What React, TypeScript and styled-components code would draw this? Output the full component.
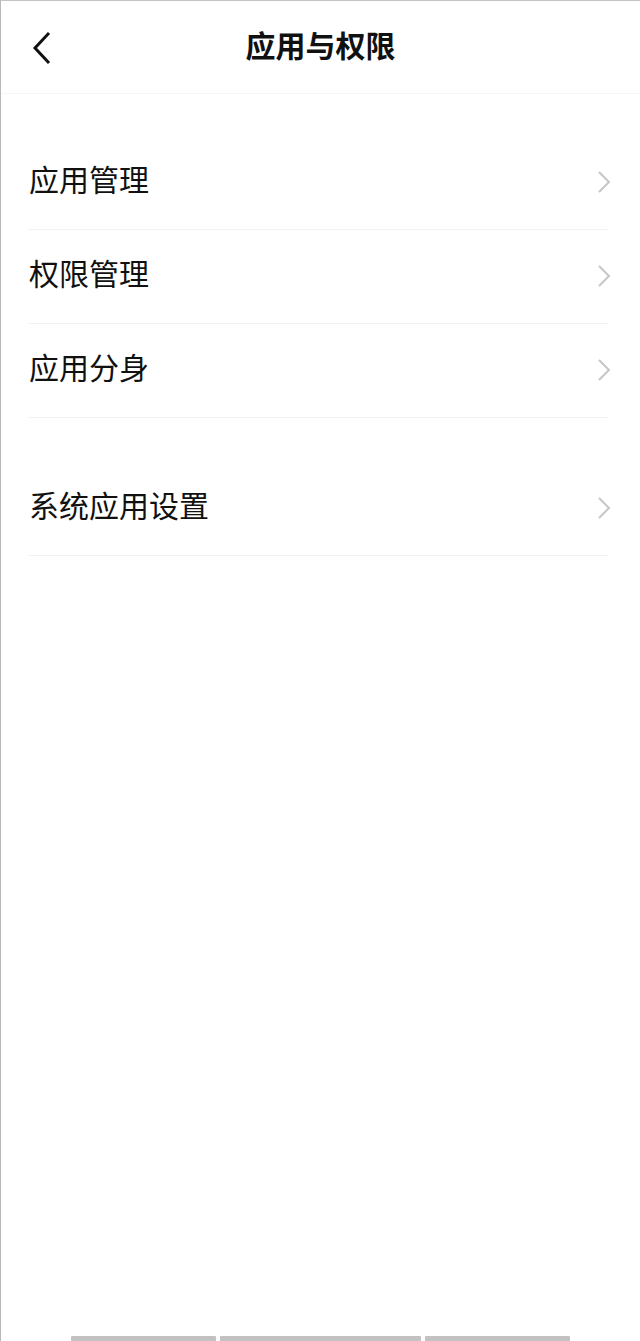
import React from "react";
import styled, { createGlobalStyle } from "styled-components";

const GlobalStyle = createGlobalStyle`
	html, body {
		margin: 0;
		padding: 0;
		background: #ffffff;
	}
	body {
		font-family: "Noto Sans CJK SC", "Noto Sans", sans-serif;
	}
`;

interface Item {
	label: string;
}

const groups: Item[][] = [
	[{ label: "应用管理" }, { label: "权限管理" }, { label: "应用分身" }],
	[{ label: "系统应用设置" }],
];

const App: React.FC = () => {
	return (
		<>
			<GlobalStyle />
			<Screen>
				<Header>
					<BackButton aria-label="返回">
						<svg width="24" height="34" viewBox="0 0 24 34">
							<path
								d="M19 3 L6 17 L19 31"
								fill="none"
								stroke="#111"
								strokeWidth="3"
								strokeLinecap="square"
							/>
						</svg>
					</BackButton>
					<Title>应用与权限</Title>
				</Header>
				<Content>
					{groups.map((group, gi) => (
						<Group key={gi}>
							{group.map((item) => (
								<Row key={item.label}>
									<Label>{item.label}</Label>
									<Chevron width="16" height="24" viewBox="0 0 16 24">
										<path
											d="M3 2 L13 12 L3 22"
											fill="none"
											stroke="#c6c6c6"
											strokeWidth="2"
										/>
									</Chevron>
								</Row>
							))}
						</Group>
					))}
				</Content>
				<HomeBar>
					<Segment w={145} />
					<Segment w={201} />
					<Segment w={145} />
				</HomeBar>
			</Screen>
		</>
	);
};

export default App;

const Screen = styled.div`
	width: 640px;
	height: 1341px;
	box-sizing: border-box;
	border-top: 1px solid #c4c4c4;
	border-left: 1px solid #b8b8b8;
	display: flex;
	flex-direction: column;
	background: #fff;
`;

const Header = styled.div`
	height: 92px;
	flex-shrink: 0;
	display: flex;
	align-items: center;
	justify-content: center;
	position: relative;
	border-bottom: 1px solid #f6f6f6;
`;

const BackButton = styled.div`
	position: absolute;
	left: 28px;
	top: 30px;
	width: 24px;
	height: 34px;
	display: flex;
`;

const Title = styled.div`
	font-size: 30px;
	font-weight: 700;
	color: #111;
	line-height: 1;
	margin-top: -6px;
`;

const Content = styled.div`
	flex: 1;
	display: flex;
	flex-direction: column;
	padding-top: 42px;
	gap: 44px;
`;

const Group = styled.div`
	display: flex;
	flex-direction: column;
`;

const Row = styled.div`
	height: 93px;
	margin: 0 31px 0 27px;
	display: flex;
	align-items: center;
	justify-content: space-between;
	border-bottom: 1px solid #f3f3f3;
`;

const Label = styled.div`
	font-size: 30px;
	font-weight: 400;
	color: #111;
	line-height: 1;
	margin-top: -10px;
	margin-left: 1px;
`;

const Chevron = styled.svg`
	margin-right: -3px;
	margin-top: -1px;
`;

const HomeBar = styled.div`
	height: 5px;
	display: flex;
	justify-content: center;
	gap: 4px;
	padding-left: 4px;
	margin-right: 5px;
`;

const Segment = styled.div<{ w: number }>`
	width: ${(p) => p.w}px;
	height: 5px;
	background: #c2c2c2;
	border-radius: 1px 1px 0 0;
`;
